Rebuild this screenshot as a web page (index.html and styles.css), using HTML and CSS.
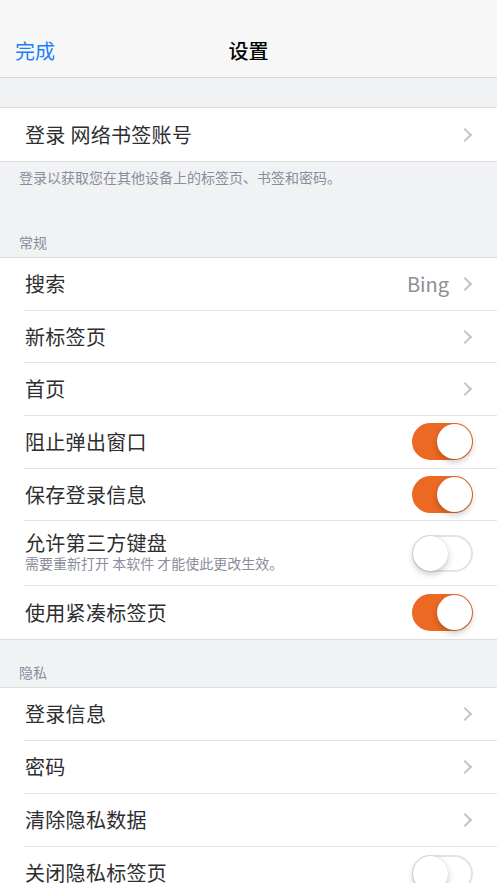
FILE: index.html
```html
<!DOCTYPE html>
<html>
<head>
    <meta charset="UTF-8">
    <title>设置</title>
    <link rel="stylesheet" href="styles.css">
</head>
<body>
    <header class="navbar">
        <span class="nav-done">完成</span>
        <span class="nav-title">设置</span>
    </header>

    <div class="group first">
        <div class="row">
            <span class="label">登录 网络书签账号</span>
            <span class="chevron"></span>
        </div>
    </div>
    <p class="footer">登录以获取您在其他设备上的标签页、书签和密码。</p>

    <div class="group-header">常规</div>
    <div class="group">
        <div class="row">
            <span class="label">搜索</span>
            <span class="detail">Bing</span>
            <span class="chevron"></span>
        </div>
        <div class="row">
            <span class="label">新标签页</span>
            <span class="chevron"></span>
        </div>
        <div class="row">
            <span class="label">首页</span>
            <span class="chevron"></span>
        </div>
        <div class="row">
            <span class="label">阻止弹出窗口</span>
            <span class="switch on"></span>
        </div>
        <div class="row">
            <span class="label">保存登录信息</span>
            <span class="switch on"></span>
        </div>
        <div class="row tall">
            <div class="label-stack">
                <span class="label">允许第三方键盘</span>
                <span class="sub">需要重新打开 本软件 才能使此更改生效。</span>
            </div>
            <span class="switch"></span>
        </div>
        <div class="row">
            <span class="label">使用紧凑标签页</span>
            <span class="switch on"></span>
        </div>
    </div>

    <div class="group-header spaced">隐私</div>
    <div class="group">
        <div class="row">
            <span class="label">登录信息</span>
            <span class="chevron"></span>
        </div>
        <div class="row">
            <span class="label">密码</span>
            <span class="chevron"></span>
        </div>
        <div class="row">
            <span class="label">清除隐私数据</span>
            <span class="chevron"></span>
        </div>
        <div class="row">
            <span class="label">关闭隐私标签页</span>
            <span class="switch"></span>
        </div>
    </div>
</body>
</html>
```

FILE: styles.css
```css
html, body {
    height: 100%;
    overflow: hidden;
}
body {
    margin: 0;
    background: #f0f2f4;
    font-family: "Noto Sans CJK SC", "Noto Sans", sans-serif;
    color: #2e2e30;
}
.navbar {
    height: 78px;
    background: #f7f7f7;
    border-bottom: 1px solid #d6d6d8;
    display: grid;
    grid-template-columns: 1fr auto 1fr;
    align-items: end;
    padding: 0 15px 12px;
    box-sizing: border-box;
}
.nav-done {
    color: #1d7ff3;
    font-size: 20px;
    line-height: 28px;
}
.nav-title {
    color: #000;
    font-size: 20px;
    font-weight: 500;
    line-height: 28px;
}
.group {
    background: #fff;
    border-top: 1px solid #dcdcde;
    border-bottom: 1px solid #dcdcde;
}
.group.first {
    margin-top: 29px;
}
.row {
    display: flex;
    align-items: center;
    height: 52.7px;
    box-sizing: border-box;
    margin-left: 24px;
    padding: 0 24px 0 1px;
    border-bottom: 1px solid #e4e4e6;
}
.row:last-child {
    border-bottom: none;
    height: 53px;
}
.row.tall {
    height: 65px;
}
.label {
    font-size: 20px;
    line-height: 26px;
    flex: 1;
    letter-spacing: 0.3px;
}
.label-stack {
    flex: 1;
    display: flex;
    flex-direction: column;
    margin-top: -2px;
}
.label-stack .label {
    line-height: 22px;
    flex: none;
}
.sub {
    font-size: 14px;
    line-height: 17px;
    margin-top: 1px;
    color: #8a8d9c;
}
.detail {
    font-size: 20px;
    color: #8e8e93;
    margin-right: 11px;
}
.chevron {
    width: 8px;
    height: 8px;
    border-top: 2px solid #c4c4c8;
    border-right: 2px solid #c4c4c8;
    transform: rotate(45deg);
    margin-right: 3px;
}
.footer {
    margin: 0;
    padding: 6px 19px 0;
    font-size: 14px;
    line-height: 18px;
    color: #8a8d9c;
}
.group-header {
    margin-top: 47px;
    padding: 0 19px 6px;
    font-size: 14px;
    line-height: 18px;
    color: #8a8d9c;
}
.group-header.spaced {
    margin-top: 23px;
}
.switch {
    position: relative;
    width: 61px;
    height: 37px;
    box-sizing: border-box;
    border-radius: 19px;
    border: 2px solid #e3e3e5;
    background: #fff;
}
.switch::after {
    content: "";
    position: absolute;
    top: -1px;
    left: -1px;
    width: 35px;
    height: 35px;
    border-radius: 50%;
    background: #fff;
    box-shadow: 0 3px 6px rgba(0, 0, 0, 0.22), 0 0 1px rgba(0, 0, 0, 0.15);
}
.switch.on {
    background: #ec6923;
    border-color: #ec6923;
}
.switch.on::after {
    left: auto;
    right: -1px;
}
```
